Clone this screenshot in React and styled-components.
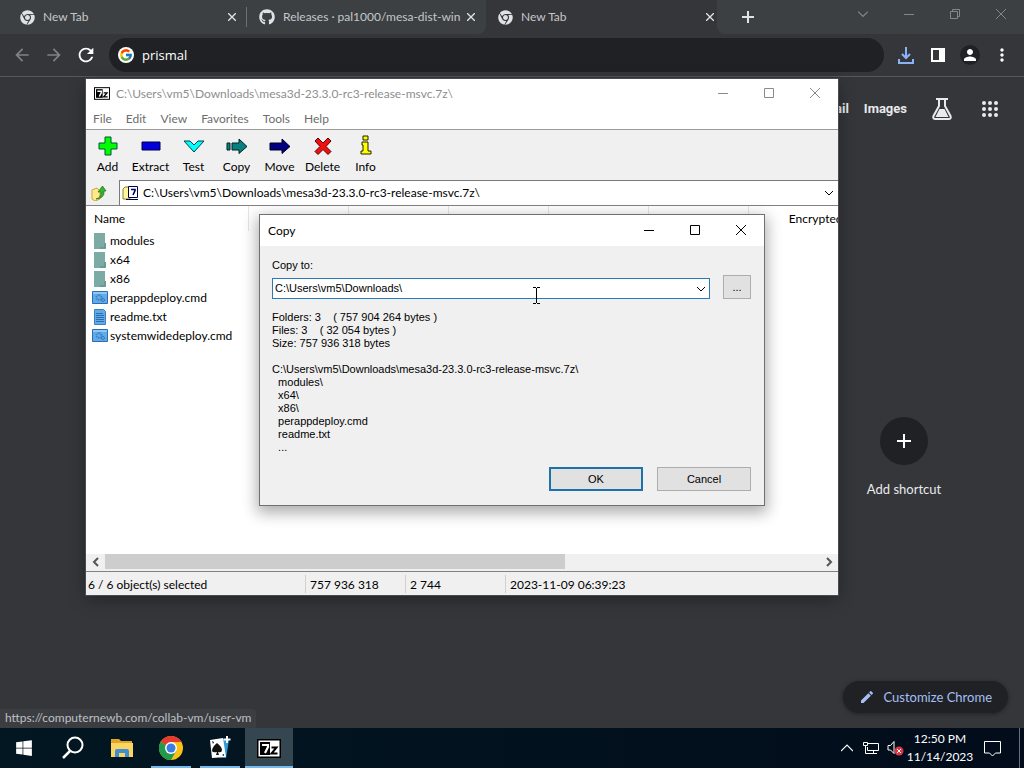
import styled, { createGlobalStyle } from "styled-components";
import { FaChrome, FaGithub, FaWindows } from "react-icons/fa";
import { FcGoogle } from "react-icons/fc";
import { MdEdit, MdPerson, MdRefresh, MdArrowBack, MdArrowForward, MdMoreVert } from "react-icons/md";

const archivePath = "C:\\Users\\vm5\\Downloads\\mesa3d-23.3.0-rc3-release-msvc.7z\\";

const files = [
  { name: "modules", kind: "folder" },
  { name: "x64", kind: "folder" },
  { name: "x86", kind: "folder" },
  { name: "perappdeploy.cmd", kind: "cmd" },
  { name: "readme.txt", kind: "txt" },
  { name: "systemwidedeploy.cmd", kind: "cmd" },
];

const copyInfo = `Folders: 3    ( 757 904 264 bytes )
Files: 3    ( 32 054 bytes )
Size: 757 936 318 bytes

${archivePath}
  modules\\
  x64\\
  x86\\
  perappdeploy.cmd
  readme.txt
  ...`;

const tools = [
  { label: "Add", icon: <path d="M8 2h6v6h6v6h-6v6H8v-6H2V8h6z" fill="#0f0" stroke="#053" /> },
  { label: "Extract", icon: <path d="M2 7h18v8H2z" fill="#0000e0" stroke="#003" /> },
  { label: "Test", icon: <path d="M1 6h6l4 4 4-4h6L11 17z" fill="#0ff" stroke="#044" /> },
  { label: "Copy", icon: <path d="M1 8h3v7H1zM6 8h7V4l8 7.500-8 7V15H6z" fill="#088080" stroke="#022" /> },
  { label: "Move", icon: <path d="M1 8h12V4l8 7.500-8 7V15H1z" fill="#000080" stroke="#002" /> },
  { label: "Delete", icon: <path d="M6 3l5 5 5-5 3 3-5 5.500 5 5-3 3-5-5-5 5-3-3 5-5L3 6z" fill="#f01010" stroke="#500" /> },
  { label: "Info", icon: <path d="M8 1h5v4H8zM7 7h6v9h3v3H6v-3h2v-6H7z" fill="#ff0" stroke="#220" /> },
];

function Glyph({ name, size = 10, width = 1 }) {
  const paths = {
    min: "M0 5.500h10",
    max: "M.5 .5h9v9h-9z",
    restore: "M.5 2.500h7v7h-7zM2.500 2.500v-2h7v7h-2",
    close: "M0 0l10 10M10 0L0 10",
    down: "M1 3l4 4 4-4",
    left: "M7 1L3 5l4 4",
    right: "M3 1l4 4-4 4",
    up: "M0 7.500l5-5 5 5",
    plus: "M5 0v10M0 5h10",
  };
  return (
    <svg width={size} height={size} viewBox="0 0 10 10" fill="none" stroke="currentColor" strokeWidth={width} aria-hidden="true">
      <path d={paths[name]} />
    </svg>
  );
}

function SevenZip({ width = 16, height = 13 }) {
  return (
    <svg width={width} height={height} viewBox="0 0 24 19" aria-hidden="true">
      <path d="M0 0h24v19H0z" fill="#000" />
      <path d="M1.500 1.500h21v16h-21z" fill="#fff" />
      <path d="M3 3h10v13H3z" fill="#000" />
      <path d="M5 6h6v2l-3 6" fill="none" stroke="#fff" strokeWidth="2.200" />
      <path d="M14.500 8.500h5l-5 6h6" fill="none" stroke="#000" strokeWidth="2" />
    </svg>
  );
}

function FileIcon({ kind }) {
  if (kind === "folder") {
    return (
      <svg width="16" height="16" viewBox="0 0 16 16" aria-hidden="true">
        <path d="M2 0h11v10h1v6H2z" fill="#7caaa5" />
        <path d="M13 10v5H8" fill="none" stroke="#5d8c88" />
      </svg>
    );
  }
  if (kind === "cmd") {
    return (
      <svg width="16" height="16" viewBox="0 0 16 16" aria-hidden="true">
        <path d="M.5 1.500h15v12H.5z" fill="#62abe8" stroke="#2b6cb3" />
        <path d="M1 2h14v2H1z" fill="#8cc8f5" />
        <circle cx="7" cy="7.500" r="2.500" fill="none" stroke="#3579bd" strokeDasharray="1 1" strokeWidth="2" />
        <circle cx="11" cy="10" r="1.500" fill="none" stroke="#3579bd" />
      </svg>
    );
  }
  return (
    <svg width="16" height="16" viewBox="0 0 16 16" aria-hidden="true">
      <path d="M2.500 .5h9l2 2v13h-11z" fill="#62abe8" stroke="#3b7fc0" />
      <path d="M4 4.500h7M4 6.500h8M4 8.500h8M4 10.500h8M4 12.500h8" stroke="#2e6dab" />
    </svg>
  );
}

function Tab({ icon, title, active }) {
  return (
    <TabItem $active={active}>
      {icon}
      <TabTitle>{title}</TabTitle>
      <TabClose aria-label={`Close ${title}`}>
        <Glyph name="close" size={8} width={1.7} />
      </TabClose>
    </TabItem>
  );
}

function Browser() {
  return (
    <>
      <TabStrip>
        <InactiveTabs>
          <Tab icon={<FaChrome size={15} />} title="New Tab" />
          <TabDivider />
          <Tab icon={<FaGithub size={16} />} title="Releases · pal1000/mesa-dist-win" />
        </InactiveTabs>
        <Tab icon={<FaChrome size={15} />} title="New Tab" active />
        <StripEnd>
          <NewTab aria-label="New tab">
            <Glyph name="plus" size={12} width={1.7} />
          </NewTab>
          <WindowControls $width="46px" $height="28px" $color="#83878a">
            <button aria-label="Search tabs"><Glyph name="down" size={12} /></button>
            <button aria-label="Minimize"><Glyph name="min" /></button>
            <button aria-label="Restore"><Glyph name="restore" /></button>
            <button aria-label="Close"><Glyph name="close" /></button>
          </WindowControls>
        </StripEnd>
      </TabStrip>
      <Toolbar>
        <ToolbarButton $dim aria-label="Back"><MdArrowBack size={20} /></ToolbarButton>
        <ToolbarButton $dim aria-label="Forward"><MdArrowForward size={20} /></ToolbarButton>
        <ToolbarButton aria-label="Reload"><MdRefresh size={22} /></ToolbarButton>
        <Omnibox>
          <GoogleBadge><FcGoogle size={14} /></GoogleBadge>
          <input aria-label="Address and search bar" defaultValue="prismal" />
        </Omnibox>
        <ToolbarButton aria-label="Downloads">
          <svg width="16" height="17" viewBox="0 0 16 17" fill="none" stroke="#8ab4f8" strokeWidth="2">
            <path d="M8 0v11M4 7l4 4 4-4M1 12v4h14v-4" />
          </svg>
        </ToolbarButton>
        <ToolbarButton aria-label="Side panel">
          <svg width="14" height="14" viewBox="0 0 14 14">
            <path d="M0 0h14v14H0zM2 2v10h6V2z" fill="#fff" fillRule="evenodd" />
          </svg>
        </ToolbarButton>
        <ToolbarButton aria-label="Profile">
          <Avatar><MdPerson size={18} /></Avatar>
        </ToolbarButton>
        <ToolbarButton aria-label="Menu"><MdMoreVert size={20} /></ToolbarButton>
      </Toolbar>
    </>
  );
}

function NewTabPage() {
  return (
    <Page>
      <TopLinks>
        <a href="#gmail">Gmail</a>
        <a href="#images">Images</a>
        <a href="#labs" aria-label="Search Labs">
          <svg width="20" height="22" viewBox="0 0 20 22">
            <path d="M4 1h12M7 1v7L1.500 18q-1 3 2 3h13q3 0 2-3L13 8V1" fill="none" stroke="#e8eaed" strokeWidth="2" />
            <path d="M7.500 11h5l4 8h-13z" fill="#e8eaed" />
          </svg>
        </a>
        <a href="#apps" aria-label="Google apps">
          <svg width="18" height="18" viewBox="0 0 18 18" fill="#e8eaed">
            {[3, 9, 15].map((y) => [3, 9, 15].map((x) => <circle key={`${x}-${y}`} cx={x} cy={y} r="2" />))}
          </svg>
        </a>
      </TopLinks>
      <Shortcuts>
        <Shortcut>
          <span><Glyph name="plus" size={14} width={1.4} /></span>
          Add shortcut
        </Shortcut>
      </Shortcuts>
      <PageFooter>
        <LinkStatus>https://computernewb.com/collab-vm/user-vm</LinkStatus>
        <Customize>
          <MdEdit size={16} />
          Customize Chrome
        </Customize>
      </PageFooter>
    </Page>
  );
}

function ArchiveWindow() {
  return (
    <ArchiveFrame>
      <TitleBar $height="29px" $color="#8e8e8e">
        <SevenZip />
        <h1>{archivePath}</h1>
        <WindowControls $width="46px" $height="28px" $color="#8a8a8a">
          <button aria-label="Minimize"><Glyph name="min" /></button>
          <button aria-label="Maximize"><Glyph name="max" /></button>
          <button aria-label="Close"><Glyph name="close" /></button>
        </WindowControls>
      </TitleBar>
      <MenuBar>
        {["File", "Edit", "View", "Favorites", "Tools", "Help"].map((item) => (
          <button key={item}>{item}</button>
        ))}
      </MenuBar>
      <ArchiveTools>
        {tools.map(({ label, icon }) => (
          <button key={label}>
            <svg width="22" height="22" viewBox="0 0 22 22" aria-hidden="true">{icon}</svg>
            {label}
          </button>
        ))}
      </ArchiveTools>
      <AddressRow>
        <UpButton aria-label="Up one level">
          <svg width="16" height="16" viewBox="0 0 16 16">
            <path d="M1 5l5-2 3 3v8l-5 2-3-2z" fill="#ffe98a" stroke="#c9a53a" />
            <path d="M5 14q5-1 5-7H7l4.500-6L15 6h-2q1 7-8 8z" fill="#35b62c" stroke="#187014" strokeWidth=".7" />
          </svg>
        </UpButton>
        <AddressCombo>
          <svg width="17" height="16" viewBox="0 0 17 16" aria-hidden="true">
            <path d="M1 4l2-2h5v12H1z" fill="#fff59a" stroke="#8a8430" />
            <path d="M6.500 1.500h9v11h-9z" fill="#fff" stroke="#000050" />
            <path d="M4 14.500h12" stroke="#000050" />
            <path d="M9 4.500h4v1l-2 4.500" fill="none" stroke="#000050" strokeWidth="1.600" />
          </svg>
          <input aria-label="Folder" defaultValue={archivePath} />
          <button aria-label="Show folders"><Glyph name="down" /></button>
        </AddressCombo>
      </AddressRow>
      <FileList>
        <table>
          <thead>
            <tr>
              <th>Name</th>
              <th>Size</th>
              <th>Packed Size</th>
              <th>Modified</th>
              <th>Attributes</th>
              <th>CRC</th>
              <th>Encrypted</th>
            </tr>
          </thead>
          <tbody>
            {files.map(({ name, kind }) => (
              <tr key={name}>
                <td>
                  <FileName>
                    <FileIcon kind={kind} />
                    {name}
                  </FileName>
                </td>
              </tr>
            ))}
          </tbody>
        </table>
      </FileList>
      <ScrollBar>
        <button aria-label="Scroll left"><Glyph name="left" width={2} /></button>
        <ScrollTrack><ScrollThumb /></ScrollTrack>
        <button aria-label="Scroll right"><Glyph name="right" width={2} /></button>
      </ScrollBar>
      <StatusBar>
        <span>6 / 6 object(s) selected</span>
        <span>757 936 318</span>
        <span>2 744</span>
        <span>2023-11-09 06:39:23</span>
      </StatusBar>
    </ArchiveFrame>
  );
}

function CopyDialog() {
  return (
    <DialogFrame role="dialog" aria-labelledby="copy-title">
      <TitleBar $height="31px" $color="#000">
        <h1 id="copy-title">Copy</h1>
        <WindowControls $width="46px" $height="30px" $color="#000">
          <button aria-label="Minimize"><Glyph name="min" /></button>
          <button aria-label="Maximize"><Glyph name="max" /></button>
          <button aria-label="Close"><Glyph name="close" /></button>
        </WindowControls>
      </TitleBar>
      <DialogBody>
        <label htmlFor="copy-to">Copy to:</label>
        <PathRow>
          <PathCombo>
            <input id="copy-to" defaultValue={"C:\\Users\\vm5\\Downloads\\"} />
            <button aria-label="Recent folders"><Glyph name="down" /></button>
          </PathCombo>
          <DialogButton $small aria-label="Browse">...</DialogButton>
        </PathRow>
        <CopyInfo>{copyInfo}</CopyInfo>
        <DialogActions>
          <DialogButton $primary>OK</DialogButton>
          <DialogButton>Cancel</DialogButton>
        </DialogActions>
      </DialogBody>
      <TextCursor width="9" height="17" viewBox="0 0 9 17" aria-hidden="true">
        <path d="M1 .5h3M5 .5h3M4.500 1v15M1 16.500h3M5 16.500h3" stroke="#000" />
      </TextCursor>
    </DialogFrame>
  );
}

function Taskbar() {
  return (
    <TaskbarRow>
      <TaskButton aria-label="Start"><FaWindows size={18} /></TaskButton>
      <TaskButton aria-label="Search">
        <svg width="24" height="24" viewBox="0 0 24 24" fill="none" stroke="#fff" strokeWidth="2">
          <circle cx="14" cy="9" r="7.500" />
          <path d="M9 15l-7 7" strokeWidth="2.500" />
        </svg>
      </TaskButton>
      <TaskButton aria-label="File Explorer">
        <svg width="24" height="20" viewBox="0 0 24 20">
          <path d="M1 1h8l2 2h11v4H1z" fill="#e0a52c" />
          <path d="M1 5h22v14H1z" fill="#fcd462" />
          <path d="M5 19v-6q0-2 2-2h10q2 0 2 2v6h-4v-4H9v4z" fill="#3f8fd0" />
        </svg>
      </TaskButton>
      <TaskButton $open aria-label="Google Chrome">
        <svg width="24" height="24" viewBox="0 0 24 24">
          <circle cx="12" cy="12" r="12" fill="#fbc116" />
          <path d="M12 12L1.600 6A12 12 0 0 1 22.400 6H12z" fill="#e33b2e" />
          <path d="M1.600 6A12 12 0 0 0 12 24l5.200-9L12 12z" fill="#229a4b" />
          <path d="M12 12h5.200v3L12 24l5-9z" fill="#fbc116" />
          <circle cx="12" cy="12" r="6" fill="#fff" />
          <circle cx="12" cy="12" r="4.500" fill="#3b7de0" />
        </svg>
      </TaskButton>
      <TaskButton $open aria-label="Solitaire">
        <svg width="22" height="24" viewBox="0 0 22 24">
          <path d="M11 3l9 1-3 18-8-1z" fill="#2f9bd8" />
          <path d="M1 4l13-2 3 19-14 1z" fill="#fff" />
          <path d="M8 7q5 4 5 7 0 3-4 2l1 3H7l1-3q-4 1-5-1 0-4 5-8z" fill="#111" />
          <path d="M18 0v7M14.500 3.500h7" stroke="#fff" strokeWidth="2" />
          <path d="M3 5l2 1-1 2zM13 19l2-1v2z" fill="#111" />
        </svg>
      </TaskButton>
      <TaskButton $active aria-label="7-Zip"><SevenZip width={24} height={19} /></TaskButton>
      <Tray>
        <button aria-label="Show hidden icons"><Glyph name="up" size={12} /></button>
        <button aria-label="Network">
          <svg width="16" height="15" viewBox="0 0 16 15" fill="none" stroke="#fff">
            <path d="M5 2.500h10.500v7H4.500V6M7 12.500h7M10.500 10v2" />
            <path d="M.5 1.500h4v3h-4zM2.500 5v7.500H7" />
          </svg>
        </button>
        <button aria-label="Volume muted">
          <svg width="17" height="16" viewBox="0 0 17 16">
            <path d="M1 5.500h2.500l3.500-4v12l-3.500-3.500H1z" fill="none" stroke="#fff" />
            <circle cx="12" cy="11" r="4.500" fill="#d93644" />
            <path d="M10 9l4 4M14 9l-4 4" stroke="#fff" />
          </svg>
        </button>
        <Clock>
          <span>12:50 PM</span>
          <span>11/14/2023</span>
        </Clock>
        <Notifications aria-label="Notifications">
          <svg width="17" height="17" viewBox="0 0 17 17" fill="none" stroke="#fff">
            <path d="M.5 1.500h16v11.500h-5l-3 3-3-3h-5z" />
          </svg>
        </Notifications>
        <ShowDesktop aria-label="Show desktop" />
      </Tray>
    </TaskbarRow>
  );
}

function App() {
  return (
    <Desktop>
      <GlobalStyle />
      <Browser />
      <NewTabPage />
      <ArchiveWindow />
      <CopyDialog />
      <Taskbar />
    </Desktop>
  );
}

const GlobalStyle = createGlobalStyle`
  * {
    box-sizing: border-box;
  }

  body {
    margin: 0;
    background: #35363a;
    font: 12px/16px Lato, "Open Sans", sans-serif;
  }

  button, input {
    margin: 0;
    padding: 0;
    border: 0;
    outline: 0;
    background: none;
    color: inherit;
    font: inherit;
  }

  a {
    color: inherit;
    text-decoration: none;
  }

  svg {
    flex: none;
    display: block;
  }
`;

const Desktop = styled.div`
  position: relative;
  display: flex;
  flex-direction: column;
  min-height: 100vh;
  overflow: hidden;
`;

const TabStrip = styled.div`
  display: flex;
  height: 34px;
  background: #35363a;
`;

const InactiveTabs = styled.div`
  display: flex;
  flex: 0 1 486px;
  min-width: 0;
  padding-left: 8px;
  border-radius: 0 0 8px 0;
  background: #3c4043;
`;

const TabItem = styled.div`
  display: flex;
  align-items: center;
  flex: 0 1 ${(p) => (p.$active ? "231px" : "239px")};
  min-width: 0;
  padding: 0 ${(p) => (p.$active ? "2px" : "10px")} 0 12px;
  color: #dee1e6;
`;

const TabTitle = styled.span`
  flex: 1;
  margin-left: 8px;
  overflow: hidden;
  white-space: nowrap;
  color: #c4c7ca;
`;

const TabClose = styled.button`
  display: grid;
  place-items: center;
  width: 10px;
  height: 16px;
`;

const TabDivider = styled.span`
  width: 1px;
  height: 20px;
  margin: 7px 0 0 -1px;
  background: #6b6f73;
`;

const StripEnd = styled.div`
  display: flex;
  flex: 1;
  border-radius: 0 0 0 8px;
  background: #3c4043;
`;

const NewTab = styled.button`
  display: grid;
  place-items: center;
  width: 62px;
  color: #dee1e6;
`;

const WindowControls = styled.div`
  display: flex;
  align-self: flex-start;
  margin-left: auto;
  color: ${(p) => p.$color};

  button {
    display: grid;
    place-items: center;
    width: ${(p) => p.$width};
    height: ${(p) => p.$height};
  }
`;

const Toolbar = styled.div`
  display: flex;
  align-items: center;
  height: 43px;
  padding: 0 6px;
  border-bottom: 1px solid #56585c;
  background: #35363a;
`;

const ToolbarButton = styled.button`
  display: grid;
  place-items: center;
  width: 32px;
  height: 32px;
  color: ${(p) => (p.$dim ? "#808286" : "#fff")};
`;

const Omnibox = styled.div`
  display: flex;
  align-items: center;
  flex: 1;
  gap: 8px;
  height: 34px;
  margin: 0 6px 0 7px;
  padding: 0 9px;
  border-radius: 17px;
  background: #202124;
  color: #fff;
  font: 13px/16px "Open Sans", sans-serif;

  input {
    flex: 1;
  }
`;

const GoogleBadge = styled.span`
  display: grid;
  place-items: center;
  width: 16px;
  height: 16px;
  border-radius: 50%;
  background: #fff;
`;

const Avatar = styled.span`
  display: grid;
  place-items: center;
  width: 20px;
  height: 20px;
  border-radius: 50%;
  background: #202124;
`;

const Page = styled.main`
  display: flex;
  flex-direction: column;
  flex: 1;
  color: #e8eaed;
`;

const TopLinks = styled.nav`
  display: flex;
  align-items: center;
  justify-content: flex-end;
  height: 64px;
  padding-right: 25px;
  font: bold 13px/16px Roboto, sans-serif;

  a {
    margin-left: 15px;
  }

  a:nth-child(n + 3) {
    margin-left: 25px;
  }

  a:last-child {
    margin-left: 29px;
  }
`;

const Shortcuts = styled.div`
  display: flex;
  align-items: flex-start;
  justify-content: flex-end;
  flex: 1;
  padding: 276px 64px 0 0;
`;

const Shortcut = styled.button`
  display: flex;
  flex-direction: column;
  align-items: center;
  gap: 16px;
  width: 112px;
  font-size: 13px;

  span {
    display: grid;
    place-items: center;
    width: 48px;
    height: 48px;
    border-radius: 50%;
    background: #202124;
    color: #fff;
  }
`;

const PageFooter = styled.footer`
  display: flex;
  align-items: flex-end;
  justify-content: space-between;
`;

const LinkStatus = styled.div`
  padding: 1px 5px 2px;
  border-radius: 0 4px 0 0;
  background: #3c3d41;
  color: #bdc1c6;
`;

const Customize = styled.button`
  display: flex;
  align-items: center;
  gap: 8px;
  height: 32px;
  margin: 0 16px 15px;
  padding: 0 16px;
  border-radius: 16px;
  background: #202124;
  box-shadow: 0 1px 4px rgba(0, 0, 0, 0.4);
  color: #a5bff5;
  font-size: 13px;
`;

const ArchiveFrame = styled.section`
  position: absolute;
  top: 79px;
  left: 86px;
  display: flex;
  flex-direction: column;
  width: 752px;
  height: 516px;
  background: #fff;
  box-shadow: 0 0 0 1px #4a4b4e, 0 4px 16px rgba(0, 0, 0, 0.35);
`;

const TitleBar = styled.header`
  display: flex;
  align-items: center;
  gap: 6px;
  height: ${(p) => p.$height};
  padding-left: 8px;
  background: #fff;
  color: ${(p) => p.$color};

  h1 {
    margin: 0;
    font: inherit;
  }
`;

const MenuBar = styled.nav`
  display: flex;
  gap: 14px;
  height: 22px;
  padding-left: 7px;
  border-bottom: 1px solid #9a9a9a;
  color: #6d6d6d;
`;

const ArchiveTools = styled.div`
  display: flex;
  height: 50px;
  background: #f0f0f0;

  button {
    display: flex;
    flex-direction: column;
    align-items: center;
    gap: 2px;
    width: 43px;
    padding-top: 5px;
  }
`;

const AddressRow = styled.div`
  display: flex;
  height: 26px;
  border-bottom: 1px solid #828282;
  background: #f0f0f0;
`;

const UpButton = styled.button`
  display: grid;
  place-items: center;
  width: 26px;
  margin-right: 7px;
`;

const AddressCombo = styled.div`
  display: flex;
  align-items: center;
  flex: 1;
  gap: 4px;
  padding: 0 4px 0 2px;
  border: 1px solid #7a7a7a;
  border-bottom: 0;
  border-right: 0;
  background: #fff;

  input {
    flex: 1;
  }
`;

const FileList = styled.div`
  flex: 1;
  overflow: hidden;

  table {
    width: 762px;
    table-layout: fixed;
    border-collapse: collapse;
  }

  th {
    width: 100px;
    height: 25px;
    padding: 0 5px;
    border-right: 1px solid #e5e5e5;
    font-weight: normal;
    text-align: right;
  }

  th:first-child {
    width: 162px;
    padding-left: 8px;
    text-align: left;
  }

  th:nth-child(4) {
    text-align: left;
  }

  td {
    height: 19px;
    padding: 0 0 0 6px;
  }
`;

const FileName = styled.span`
  display: flex;
  align-items: center;
  gap: 2px;
  white-space: nowrap;
`;

const ScrollBar = styled.div`
  display: flex;
  height: 18px;
  padding-bottom: 2px;
  border-bottom: 1px solid #828282;
  background: #f0f0f0;

  button {
    display: grid;
    place-items: center;
    width: 19px;
    color: #555;
  }
`;

const ScrollTrack = styled.div`
  flex: 1;
`;

const ScrollThumb = styled.div`
  width: 64.4%;
  height: 100%;
  background: #cdcdcd;
`;

const StatusBar = styled.footer`
  display: flex;
  align-items: center;
  height: 23px;
  background: #f0f0f0;

  span {
    width: 100px;
    padding: 2px 0 0 4px;
    border-left: 1px solid #d0d0d0;
    white-space: nowrap;
  }

  span:first-child {
    width: 219px;
    padding-left: 2px;
    border: 0;
  }

  span:last-child {
    flex: 1;
  }
`;

const DialogFrame = styled.section`
  position: absolute;
  top: 214px;
  left: 259px;
  width: 506px;
  border: 1px solid #707070;
  background: #f0f0f0;
  box-shadow: 0 5px 14px 2px rgba(0, 0, 0, 0.32);
`;

const DialogBody = styled.div`
  display: flex;
  flex-direction: column;
  padding: 13px 13px 14px 12px;
  font: 11px/13px "Liberation Sans", Arial, sans-serif;
`;

const PathRow = styled.div`
  display: flex;
  align-items: flex-end;
  gap: 13px;
  margin: 3px 0 12px;
`;

const PathCombo = styled.div`
  display: flex;
  align-items: center;
  flex: 1;
  height: 21px;
  padding: 0 3px 0 2px;
  border: 1px solid #2a7ab5;
  background: #fff;

  input {
    flex: 1;
  }
`;

const CopyInfo = styled.pre`
  margin: 0 0 13px;
  font: inherit;
`;

const DialogActions = styled.div`
  display: flex;
  justify-content: flex-end;
  gap: 14px;
`;

const DialogButton = styled.button`
  width: ${(p) => (p.$small ? "28px" : "94px")};
  height: 24px;
  border: ${(p) => (p.$primary ? "2px solid #1f72a8" : "1px solid #adadad")};
  background: #e1e1e1;
`;

const TextCursor = styled.svg`
  position: absolute;
  top: 72px;
  left: 272px;
`;

const TaskbarRow = styled.footer`
  display: flex;
  gap: 1px;
  height: 40px;
  background: linear-gradient(90deg, #021722, #020c1b);
  color: #fff;
`;

const TaskButton = styled.button`
  display: grid;
  place-items: center;
  width: 48px;
  background: ${(p) => (p.$active ? "#34464f" : "none")};
  box-shadow: ${(p) => (p.$active ? "inset 0 -2px #76b9ed" : "none")};
  ${(p) =>
    p.$open &&
    `background: linear-gradient(#76b9ed, #76b9ed) center bottom / 40px 2px no-repeat;`}
`;

const Tray = styled.div`
  display: flex;
  margin-left: auto;

  button {
    display: grid;
    place-items: center;
    width: 24px;
  }
`;

const Clock = styled.div`
  display: flex;
  flex-direction: column;
  align-items: center;
  justify-content: center;
  width: 66px;
  line-height: 18px;
`;

const Notifications = styled.button`
  && {
    width: 38px;
  }
`;

const ShowDesktop = styled.button`
  && {
    width: 5px;
    margin-left: 8px;
    border-left: 1px solid #66707a;
  }
`;

export default App;
